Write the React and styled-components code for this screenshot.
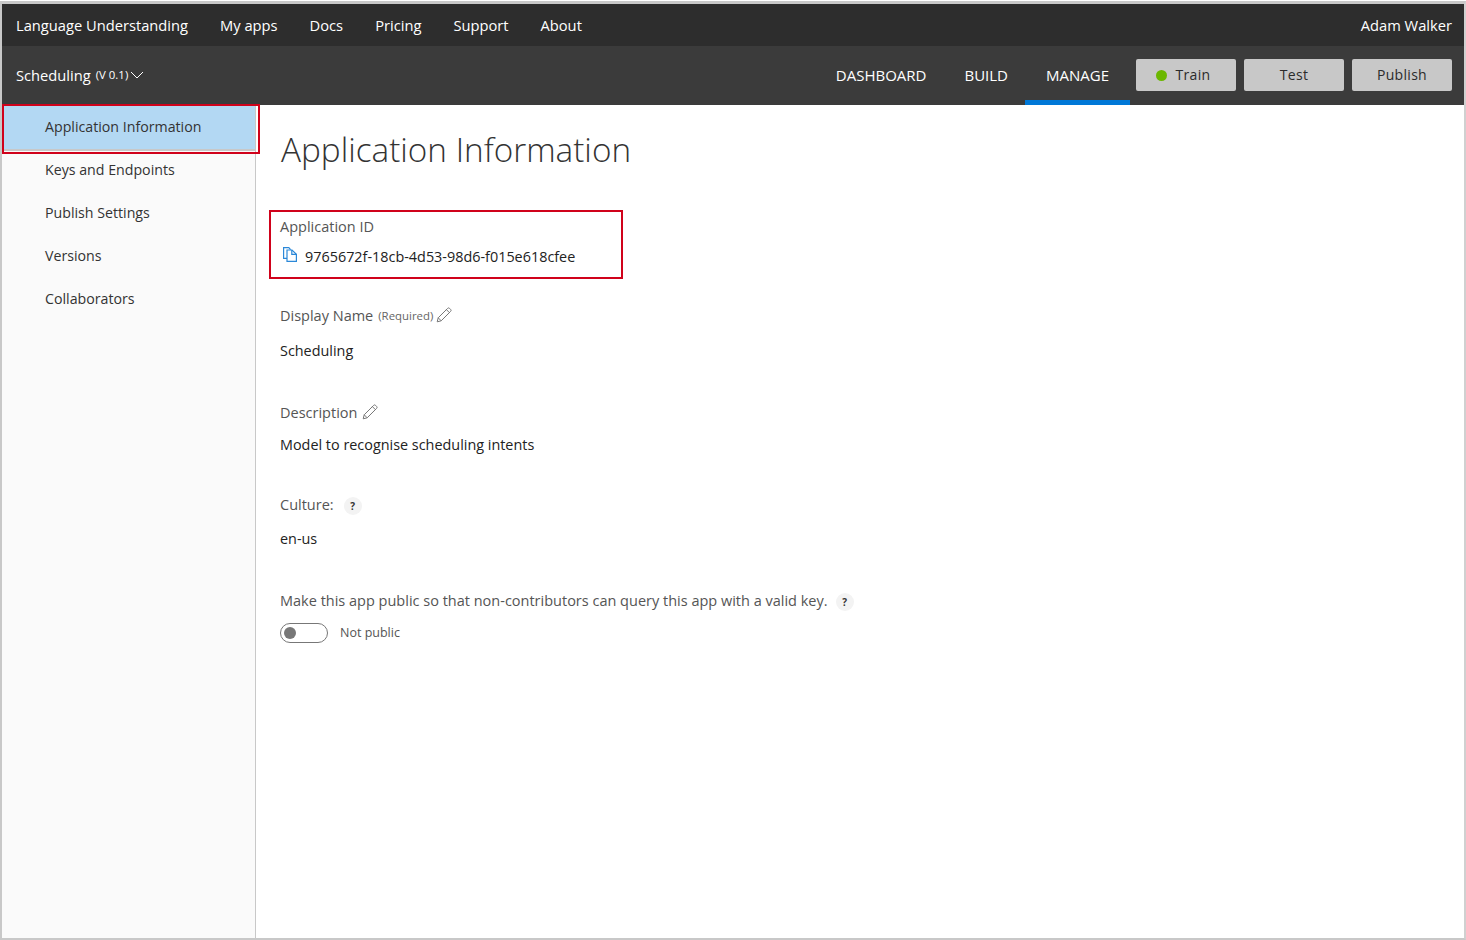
import React from 'react';
import styled, { createGlobalStyle } from 'styled-components';

const GlobalStyle = createGlobalStyle`
  html, body { margin: 0; padding: 0; background: #fff; }
  body { font-family: "Open Sans", "Noto Sans", sans-serif; }
`;

const Frame = styled.div`
  position: relative;
  box-sizing: border-box;
  width: 1466px;
  height: 939px;
  margin-top: 1px;
  display: flex;
  flex-direction: column;
  border-top: 3px solid #c8c8c8;
  border-left: 2px solid #c8c8c8;
  border-right: 2px solid #d0d0d0;
  border-bottom: 2px solid #c8c8c8;
  overflow: hidden;
`;

const TopBar = styled.header`
  flex: 0 0 42px;
  display: flex;
  align-items: center;
  padding: 0 12px 0 14px;
  background: #2d2d2d;
  color: #fff;
  font-size: 14.7px;
`;

const TopLink = styled.a`
  margin-right: 32px;
  white-space: nowrap;
`;

const UserName = styled.span`
  margin-left: auto;
`;

const SubBar = styled.div`
  flex: 0 0 59px;
  display: flex;
  align-items: center;
  padding: 0 12px 0 14px;
  background: #3b3b3b;
  color: #fff;
`;

const AppName = styled.div`
  display: flex;
  align-items: center;
  margin-bottom: 2px;
  font-size: 14.7px;
`;

const Version = styled.span`
  margin-left: 5px;
  font-size: 11.4px;
`;

const Tabs = styled.nav`
  display: flex;
  align-items: stretch;
  align-self: stretch;
  margin-left: auto;
  margin-right: 6px;
`;

const Tab = styled.a`
  display: flex;
  align-items: center;
  box-sizing: border-box;
  padding: 3px 21px 0;
  font-size: 15px;
  border-bottom: 5px solid ${(p) => (p.$active ? '#0078d7' : 'transparent')};
  & + & {
    margin-left: -4px;
  }
`;

const Buttons = styled.div`
  display: flex;
  gap: 8px;
  margin-bottom: 1px;
`;

const ActionButton = styled.button`
  display: flex;
  align-items: center;
  justify-content: center;
  width: 100px;
  height: 32px;
  padding: 0 0 2px;
  border: 0;
  border-radius: 2px;
  background: #c8c8c8;
  color: #2b2b2b;
  font-family: inherit;
  font-size: 14px;
  letter-spacing: 0.3px;
`;

const StatusDot = styled.span`
  width: 11px;
  height: 11px;
  margin: 2px 9px 0 -6px;
  border-radius: 50%;
  background: #6bb700;
`;

const Body = styled.div`
  flex: 1;
  display: flex;
  min-height: 0;
`;

const Sidebar = styled.aside`
  flex: 0 0 254px;
  box-sizing: border-box;
  background: #fafafa;
  border-right: 1px solid #c8c8c8;
`;

const SideItem = styled.a`
  display: flex;
  align-items: center;
  box-sizing: border-box;
  height: 43px;
  padding-left: 43px;
  font-size: 14.2px;
  color: #333;
`;

const ActiveSideItem = styled(SideItem)`
  height: 46px;
  margin-bottom: -3px;
  padding-bottom: 1px;
  background: #b3d8f3;
  border-bottom: 2px solid #c8c8c8;
`;

const Content = styled.main`
  flex: 1;
  padding: 0 0 0 24px;
  color: #111;
`;

const Title = styled.h1`
  margin: 21px 0 0 1px;
  font-size: 33.3px;
  line-height: 46px;
  font-weight: 300;
  color: #333;
`;

const Label = styled.div`
  display: flex;
  align-items: center;
  height: 20px;
  font-size: 14.5px;
  color: #555;
`;

const Small = styled.span`
  margin-left: 5px;
  font-size: 11.4px;
  color: #666;
`;

const Value = styled.div`
  margin-top: ${(p) => p.$top || 0}px;
  font-size: 14.4px;
  line-height: 20px;
  color: #222;
`;

const Field = styled.section`
  margin-top: ${(p) => p.$top}px;
`;

const IdRow = styled.div`
  display: flex;
  align-items: center;
  margin-top: 11px;
  padding-left: 3px;
  gap: 8px;
`;

const ToggleRow = styled.div`
  display: flex;
  align-items: center;
  margin-top: 13px;
`;

const Toggle = styled.span`
  display: flex;
  align-items: center;
  box-sizing: border-box;
  width: 48px;
  height: 20px;
  padding-left: 3px;
  border: 1px solid #777;
  border-radius: 10px;
`;

const Knob = styled.span`
  width: 12px;
  height: 12px;
  border-radius: 50%;
  background: #777;
`;

const ToggleText = styled.span`
  margin: -1px 0 0 12px;
  font-size: 12.5px;
  color: #555;
`;

const Help = styled.span`
  display: inline-flex;
  align-items: center;
  justify-content: center;
  width: 18px;
  height: 18px;
  margin-left: ${(p) => p.$gap}px;
  margin-top: 4px;
  border-radius: 50%;
  background: #f3f3f3;
  font-size: 10px;
  font-weight: 700;
  color: #333;
`;

const Highlight = styled.div`
  position: absolute;
  box-sizing: border-box;
  border: 2px solid #d0021b;
  left: ${(p) => p.$x}px;
  top: ${(p) => p.$y}px;
  width: ${(p) => p.$w}px;
  height: ${(p) => p.$h}px;
  pointer-events: none;
`;

const ChevronSvg = styled.svg`
  margin-left: 2px;
`;

const PencilSvg = styled.svg`
  margin-left: ${(p) => p.$gap}px;
`;

const CopySvg = styled.svg`
  margin-top: -5px;
`;

const Chevron = () => (
  <ChevronSvg width="14" height="8" viewBox="0 0 14 8" fill="none" stroke="#fff" strokeWidth="1">
    <path d="M1 1l6 6 6-6" />
  </ChevronSvg>
);

const CopyIcon = () => (
  <CopySvg width="14" height="15" viewBox="0 0 14 15" fill="none" stroke="#2b88d8" strokeWidth="1.2">
    <path d="M4 11.4H.6V.6h5.2L7.6 2.6" />
    <path d="M4 3h5l4.4 4.2v7.2H4z" />
    <path d="M8.8 3v4.4h4.6" />
  </CopySvg>
);

const Pencil = ({ gap }) => (
  <PencilSvg $gap={gap} width="16" height="16" viewBox="0 0 16 16" fill="none" stroke="#777" strokeWidth="1">
    <path d="M1.2 14.8l1-4L11.6 1.4a1.4 1.4 0 0 1 2 0l1 1a1.4 1.4 0 0 1 0 2L5.2 13.8z" />
    <path d="M2.2 10.8l3 3M10.4 2.6l3 3" />
  </PencilSvg>
);

export default function App() {
  return (
    <>
      <GlobalStyle />
      <Frame>
        <TopBar>
          <TopLink>Language Understanding</TopLink>
          <TopLink>My apps</TopLink>
          <TopLink>Docs</TopLink>
          <TopLink>Pricing</TopLink>
          <TopLink>Support</TopLink>
          <TopLink>About</TopLink>
          <UserName>Adam Walker</UserName>
        </TopBar>
        <SubBar>
          <AppName>
            Scheduling<Version>(V 0.1)</Version>
            <Chevron />
          </AppName>
          <Tabs>
            <Tab>DASHBOARD</Tab>
            <Tab>BUILD</Tab>
            <Tab $active>MANAGE</Tab>
          </Tabs>
          <Buttons>
            <ActionButton><StatusDot />Train</ActionButton>
            <ActionButton>Test</ActionButton>
            <ActionButton>Publish</ActionButton>
          </Buttons>
        </SubBar>
        <Body>
          <Sidebar>
            <ActiveSideItem>Application Information</ActiveSideItem>
            <SideItem>Keys and Endpoints</SideItem>
            <SideItem>Publish Settings</SideItem>
            <SideItem>Versions</SideItem>
            <SideItem>Collaborators</SideItem>
          </Sidebar>
          <Content>
            <Title>Application Information</Title>
            <Field $top={44}>
              <Label>Application ID</Label>
              <IdRow>
                <CopyIcon />
                <Value>9765672f-18cb-4d53-98d6-f015e618cfee</Value>
              </IdRow>
            </Field>
            <Field $top={38}>
              <Label>
                Display Name <Small>(Required)</Small>
                <Pencil gap={3} />
              </Label>
              <Value $top={16}>Scheduling</Value>
            </Field>
            <Field $top={41}>
              <Label>
                Description
                <Pencil gap={5} />
              </Label>
              <Value $top={13}>Model to recognise scheduling intents</Value>
            </Field>
            <Field $top={39}>
              <Label>
                Culture:
                <Help $gap={10}>?</Help>
              </Label>
              <Value $top={15}>en-us</Value>
            </Field>
            <Field $top={41}>
              <Label>
                Make this app public so that non-contributors can query this app with a valid key.
                <Help $gap={8}>?</Help>
              </Label>
              <ToggleRow>
                <Toggle><Knob /></Toggle>
                <ToggleText>Not public</ToggleText>
              </ToggleRow>
            </Field>
          </Content>
        </Body>
        <Highlight $x={0} $y={100} $w={258} $h={50} />
        <Highlight $x={267} $y={206} $w={354} $h={69} />
      </Frame>
    </>
  );
}
